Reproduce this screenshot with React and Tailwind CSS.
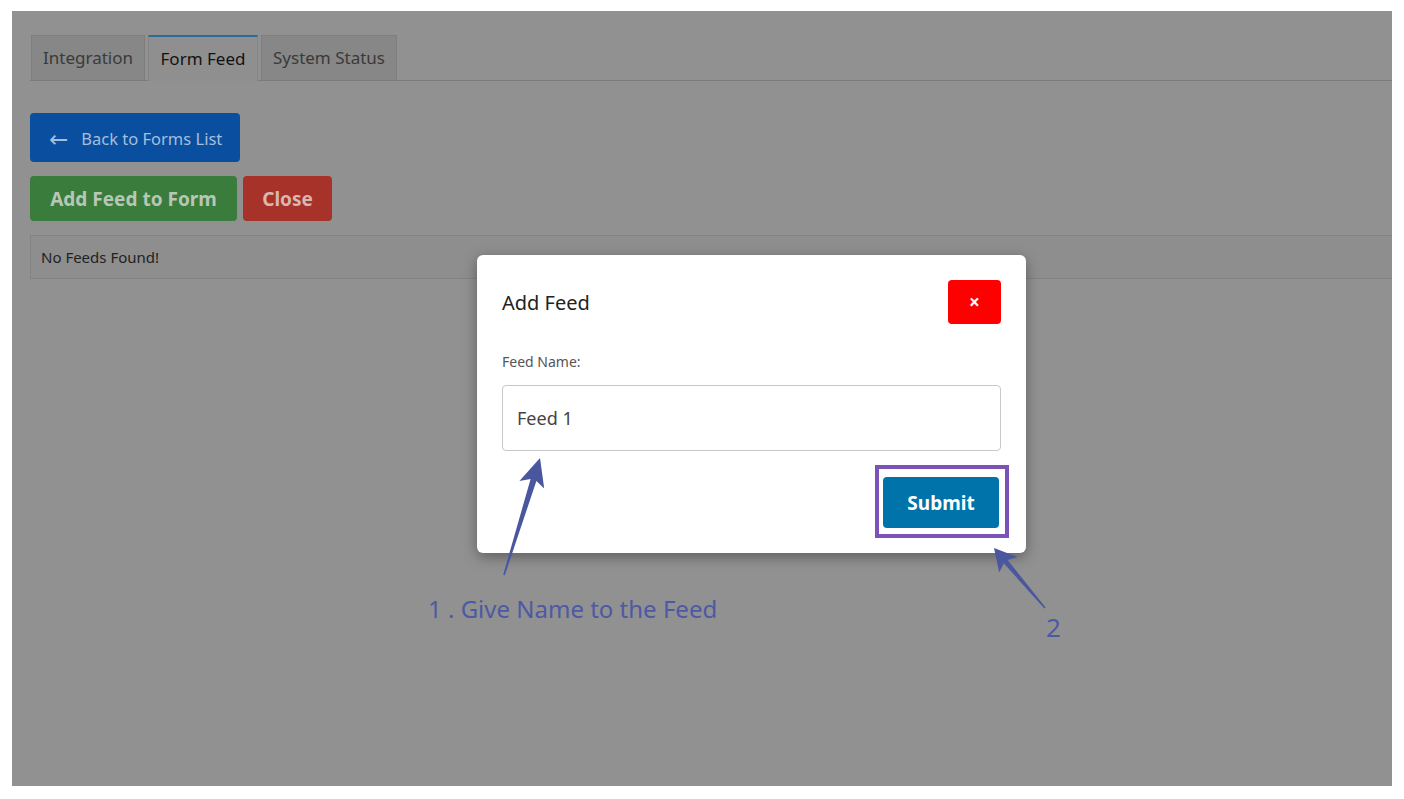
import React from "react";

const tabs = [
    { label: "Integration", active: false, w: "w-[114px]" },
    { label: "Form Feed", active: true, w: "w-[110px]" },
    { label: "System Status", active: false, w: "w-[136px]" },
];

function Tabs() {
    return (
        <div className="flex items-end gap-[3px] border-b border-[#7b7b7b] pl-[1px]">
            {tabs.map((t) => (
                <div
                    key={t.label}
                    className={
                        t.active
                            ? `${t.w} h-[46px] flex items-center justify-center border-x border-t-2 border-[#858585] border-t-[#2b6d98] bg-[#8f8f8f] text-[17px] text-[#121212] -mb-[1px]`
                            : `${t.w} h-[45px] flex items-center justify-center border border-b-0 border-[#7e7e7e] bg-[#878787] text-[17px] text-[#3a3a3a]`
                    }
                >
                    {t.label}
                </div>
            ))}
        </div>
    );
}

function Arrows() {
    // hand-drawn annotation arrows laid over the screenshot
    return (
        <svg className="absolute left-0 top-0 pointer-events-none" width="1404" height="799" viewBox="0 0 1404 799">
            <polygon
                fill="#4a579f"
                points="540,458 544.2,488.6 536.4,481 504.8,575.2 503.2,574.8 530.6,479 519.4,481"
            />
            <polygon
                fill="#4a579f"
                points="994,548 1017.4,557 1007.6,560.1 1045.6,607.5 1044.4,608.5 1003.8,563.3 999.2,572.6"
            />
        </svg>
    );
}

export default function App() {
    return (
        <div
            className="relative w-[1404px] h-[799px] overflow-hidden bg-white pt-[11px] pl-[12px]"
            style={{ fontFamily: '"Noto Sans", "Open Sans", sans-serif' }}
        >
            <div className="w-[1380px] h-[775px] bg-[#919191] pt-[24px] pl-[18px]">
                <Tabs />

                <button className="mt-[32px] flex items-center w-[210px] h-[49px] rounded-[4px] bg-[#0a4f9f] pl-[19px] pt-[4px] text-[16.5px] text-[#a6bddc]">
                    <span className="mr-[13px] text-[23px] leading-none" style={{ fontFamily: '"DejaVu Sans", sans-serif' }}>
                        ←
                    </span>
                    Back to Forms List
                </button>

                <div className="mt-[14px] flex gap-[6px]">
                    <button className="w-[207px] h-[45px] rounded-[4px] bg-[#3a7c3c] pt-[2px] text-[19px] font-bold text-[#b8c7b5]">
                        Add Feed to Form
                    </button>
                    <button className="w-[89px] h-[45px] rounded-[4px] bg-[#a6322a] pt-[2px] text-[19px] font-bold text-[#dbb6b0]">
                        Close
                    </button>
                </div>

                <div className="mt-[14px] h-[44px] flex items-center border border-r-0 border-[#828282] bg-[#8e8e8e] pl-[10px] text-[15px] text-[#222]">
                    No Feeds Found!
                </div>
            </div>

            {/* modal */}
            <div className="absolute left-[477px] top-[255px] w-[549px] rounded-[6px] bg-white px-[25px] pt-[25px] pb-[25px] shadow-[0_4px_14px_rgba(0,0,0,0.35)]">
                <div className="flex items-center justify-between h-[44px]">
                    <h3 className="mt-[2px] text-[20px] text-[#222]">Add Feed</h3>
                    <button className="w-[53px] h-[44px] rounded-[4px] bg-[#ff0000] text-[19px] font-bold text-white">
                        ×
                    </button>
                </div>
                <label className="mt-[28px] block text-[14px] leading-[20px] text-[#555]">Feed Name:</label>
                <div className="mt-[13px] h-[66px] flex items-center rounded-[4px] border border-[#c8c8c8] pl-[14px] text-[18px] text-[#444]">
                    Feed 1
                </div>
                <div className="mt-[26px] flex justify-end pr-[2px]">
                    <button className="w-[116px] h-[51px] rounded-[4px] bg-[#0073aa] pt-[2px] text-[19px] font-bold text-white">
                        Submit
                    </button>
                </div>
            </div>

            {/* annotations */}
            <div className="absolute left-[875px] top-[465px] w-[134px] h-[73px] border-4 border-[#7c51b8]" />
            <Arrows />
            <div className="absolute left-[428px] top-[593px] text-[24px] leading-[32px] text-[#4d59a3]">
                1 . Give Name to the Feed
            </div>
            <div className="absolute left-[1046px] top-[611px] text-[26px] leading-[32px] text-[#4d59a3]">2</div>
        </div>
    );
}
